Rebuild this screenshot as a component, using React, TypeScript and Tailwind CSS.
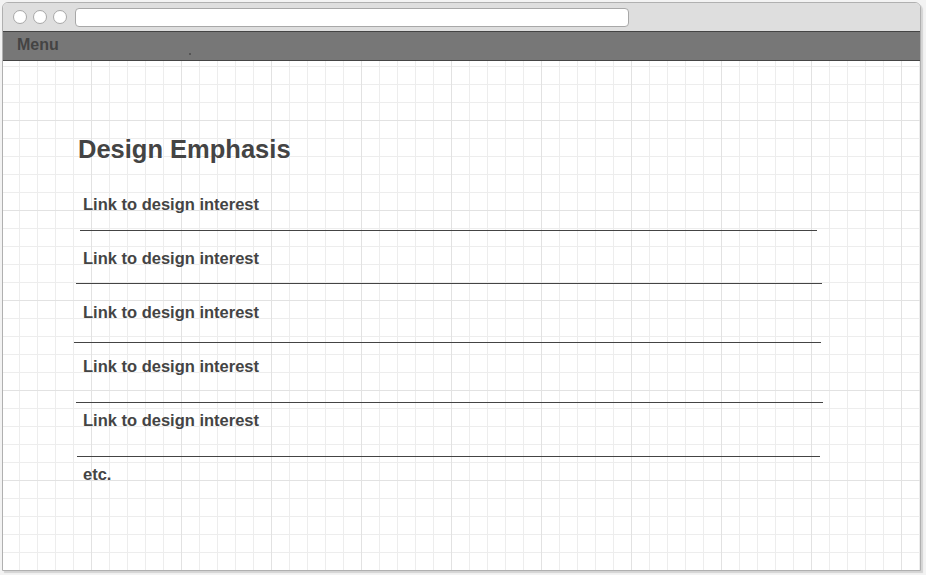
const links = [
  { label: "Link to design interest", rule: "mt-[16px] mb-[17px] ml-[-3px] w-[737px]" },
  { label: "Link to design interest", rule: "mt-[15px] mb-[18px] ml-[-7px] w-[746px]" },
  { label: "Link to design interest", rule: "mt-[20px] mb-[13px] ml-[-9px] w-[747px]" },
  { label: "Link to design interest", rule: "mt-[26px] mb-[7px] ml-[-7px] w-[747px]" },
  { label: "Link to design interest", rule: "mt-[26px] mb-[7px] ml-[-6px] w-[743px]" },
];

function TitleBar() {
  return (
    <div className="flex h-[28px] items-center gap-[6px] rounded-t-[5px] bg-[#dedede] pl-[10px]">
      <span className="h-[14px] w-[14px] rounded-full border border-[#a8a8a8] bg-white" />
      <span className="h-[14px] w-[14px] rounded-full border border-[#a8a8a8] bg-white" />
      <span className="h-[14px] w-[14px] rounded-full border border-[#a8a8a8] bg-white" />
      <div className="ml-[2px] h-[19px] w-[554px] rounded-[4px] border border-[#a8a8a8] bg-white" />
    </div>
  );
}

function MenuBar() {
  return (
    <div className="relative h-[30px] border-y border-[#444] bg-[#777] pl-[14px] pt-[1px]">
      <span className="text-[16px] leading-[20px] font-bold text-[#444]">Menu</span>
      <span className="absolute left-[186px] top-[21px] h-[2px] w-[2px] bg-[#555]" />
    </div>
  );
}

export default function App() {
  return (
    <div className="h-[575px] w-[926px] overflow-hidden bg-[#f3f3f3] pl-[2px] pt-[2px] font-['Liberation_Sans',Arial,sans-serif]">
      <div className="flex h-[569px] w-[919px] flex-col rounded-t-[6px] border border-[#b0b0b0] bg-white shadow-[2px_2px_1px_#d4d4d4]">
        <TitleBar />
        <MenuBar />
        <main className="flex-1 bg-white bg-[linear-gradient(to_right,#e2e2e2_1px,transparent_1px),linear-gradient(to_bottom,#e2e2e2_1px,transparent_1px),linear-gradient(to_right,#ededed_1px,transparent_1px),linear-gradient(to_bottom,#ededed_1px,transparent_1px)] bg-[length:90px_90px,90px_90px,18px_18px,18px_18px] bg-[position:88px_0,0_59px,16px_0,0_5px] pl-[75px] pt-[73px] text-[#444]">
          <h1 className="text-[25.5px] leading-[30px] font-bold">Design Emphasis</h1>
          <div className="mt-[30px] pl-[5px]">
            {links.map((item, i) => (
              <div key={i}>
                <div className="text-[16.5px] leading-[20px] font-bold">{item.label}</div>
                <div className={`h-px bg-[#444] ${item.rule}`} />
              </div>
            ))}
            <div className="text-[16.5px] leading-[20px] font-bold">etc.</div>
          </div>
        </main>
      </div>
    </div>
  );
}
